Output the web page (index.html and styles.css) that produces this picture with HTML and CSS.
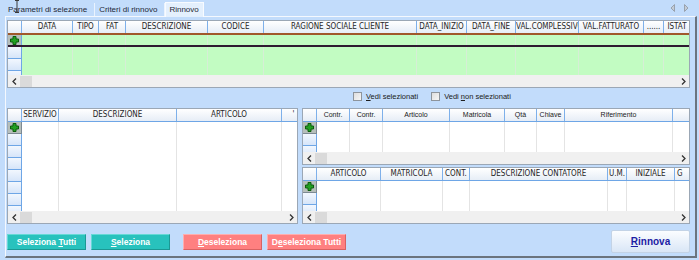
FILE: index.html
```html
<!DOCTYPE html>
<html lang="it">
<head>
    <meta charset="UTF-8">
    <meta name="viewport" content="width=device-width, initial-scale=1.0">
    <title>Rinnovo</title>
    <link rel="stylesheet" href="styles.css">
</head>
<body>
<div class="tabbar">
    <div class="tab">Parametri di selezione</div>
    <div class="tab">Criteri di rinnovo</div>
    <div class="tab active">Rinnovo</div>
    <div class="tab-arrows">
        <svg width="19" height="8" viewBox="0 0 19 8"><polygon points="4.5,0.5 1,4 4.5,7.5" fill="#c4ccd6" stroke="#98a2ae"/><polygon points="14.5,0.5 18,4 14.5,7.5" fill="#c4ccd6" stroke="#98a2ae"/></svg>
    </div>
</div>
<svg class="cursor" width="6" height="13" viewBox="0 0 6 13"><path d="M1 0.5h4M3 0.5v12M1 12.5h4" stroke="#3a3a3a" fill="none"/></svg>

<div class="panel">
    <!-- contratti da rinnovare -->
    <div class="grid g-top" data-rows="4">
        <div class="row head">
            <div class="c ind"></div>
            <div class="c">DATA</div>
            <div class="c">TIPO</div>
            <div class="c">FAT</div>
            <div class="c">DESCRIZIONE</div>
            <div class="c">CODICE</div>
            <div class="c">RAGIONE SOCIALE CLIENTE</div>
            <div class="c">DATA_INIZIO</div>
            <div class="c">DATA_FINE</div>
            <div class="c">VAL.COMPLESSIVO</div>
            <div class="c">VAL.FATTURATO</div>
            <div class="c">......</div>
            <div class="c">ISTAT</div>
        </div>
        <div class="body"></div>
        <div class="hscroll"><span class="arr"><svg width="5" height="7" viewBox="0 0 5 7"><polyline points="4,0.5 1,3.5 4,6.5" fill="none" stroke="#333" stroke-width="1.3"/></svg></span><span class="thumb"></span><span class="arr end"><svg width="5" height="7" viewBox="0 0 5 7"><polyline points="1,0.5 4,3.5 1,6.5" fill="none" stroke="#333" stroke-width="1.3"/></svg></span></div>
    </div>

    <div class="checks">
        <label class="chk"><span class="box"></span><span><u>V</u>edi selezionati</span></label>
        <label class="chk"><span class="box"></span><span>Vedi <u>n</u>on selezionati</span></label>
    </div>

    <div class="middle">
        <div class="grid g-left" data-rows="8">
            <div class="row head">
                <div class="c ind"></div>
                <div class="c">SERVIZIO</div>
                <div class="c">DESCRIZIONE</div>
                <div class="c">ARTICOLO</div>
                <div class="c">'</div>
            </div>
            <div class="body"></div>
            <div class="hscroll"><span class="arr"><svg width="5" height="7" viewBox="0 0 5 7"><polyline points="4,0.5 1,3.5 4,6.5" fill="none" stroke="#333" stroke-width="1.3"/></svg></span><span class="thumb"></span><span class="arr end"><svg width="5" height="7" viewBox="0 0 5 7"><polyline points="1,0.5 4,3.5 1,6.5" fill="none" stroke="#333" stroke-width="1.3"/></svg></span></div>
        </div>

        <div class="right">
            <div class="grid g-r g-contr" data-rows="3">
                <div class="row head mixed">
                    <div class="c ind"></div>
                    <div class="c">Contr.</div>
                    <div class="c">Contr.</div>
                    <div class="c">Articolo</div>
                    <div class="c">Matricola</div>
                    <div class="c">Qtà</div>
                    <div class="c">Chiave</div>
                    <div class="c">Riferimento</div>
                    <div class="c"></div>
                </div>
                <div class="body"></div>
                <div class="hscroll"><span class="arr"><svg width="5" height="7" viewBox="0 0 5 7"><polyline points="4,0.5 1,3.5 4,6.5" fill="none" stroke="#333" stroke-width="1.3"/></svg></span><span class="thumb"></span><span class="arr end"><svg width="5" height="7" viewBox="0 0 5 7"><polyline points="1,0.5 4,3.5 1,6.5" fill="none" stroke="#333" stroke-width="1.3"/></svg></span></div>
            </div>
            <div class="grid g-r g-cont" data-rows="3">
                <div class="row head">
                    <div class="c ind"></div>
                    <div class="c">ARTICOLO</div>
                    <div class="c">MATRICOLA</div>
                    <div class="c">CONT.</div>
                    <div class="c">DESCRIZIONE CONTATORE</div>
                    <div class="c">U.M.</div>
                    <div class="c">INIZIALE</div>
                    <div class="c left">G</div>
                </div>
                <div class="body"></div>
                <div class="hscroll"><span class="arr"><svg width="5" height="7" viewBox="0 0 5 7"><polyline points="4,0.5 1,3.5 4,6.5" fill="none" stroke="#333" stroke-width="1.3"/></svg></span><span class="thumb"></span><span class="arr end"><svg width="5" height="7" viewBox="0 0 5 7"><polyline points="1,0.5 4,3.5 1,6.5" fill="none" stroke="#333" stroke-width="1.3"/></svg></span></div>
            </div>
        </div>
    </div>

    <div class="buttons">
        <button class="btn teal">Seleziona <u>T</u>utti</button>
        <button class="btn teal"><u>S</u>eleziona</button>
        <button class="btn red spaced"><u>D</u>eseleziona</button>
        <button class="btn red">D<u>e</u>seleziona Tutti</button>
        <button class="rinnova"><u>R</u>innova</button>
    </div>
</div>

<script>
    var plusIcon = '<svg width="9" height="9" viewBox="0 0 9 9"><path d="M3 0.5h3v2.5h2.5v3h-2.5v2.5h-3v-2.5h-2.5v-3h2.5z" fill="#22a022" stroke="#0c5c0c"/></svg>';

    // empty rows for every grid, first row is the "new record" row
    var grids = document.querySelectorAll('.grid');
    for (var g = 0; g < grids.length; g++) {
        var grid = grids[g];
        var cols = grid.querySelector('.head').children.length;
        var body = grid.querySelector('.body');
        var rows = parseInt(grid.getAttribute('data-rows'), 10);

        for (var i = 0; i < rows; i++) {
            var row = document.createElement('div');
            row.className = i === 0 ? 'row first' : 'row';
            for (var c = 0; c < cols; c++) {
                var cell = document.createElement('div');
                cell.className = 'c';
                if (c === 0) {
                    cell.className = 'c ind';
                    if (i === 0) {
                        cell.className += ' plus';
                        cell.innerHTML = plusIcon;
                    }
                }
                row.appendChild(cell);
            }
            body.appendChild(row);
        }
    }
</script>
</body>
</html>
```

FILE: styles.css
```css
body {
    margin: 0;
    width: 699px;
    height: 260px;
    overflow: hidden;
    position: relative;
    background-color: #c2dcfb;
    font-family: "Liberation Sans", Arial, sans-serif;
    font-size: 8px;
    color: #1e2836;
}

/* tabs */
.tabbar {
    display: flex;
    align-items: flex-end;
    height: 16px;
    padding-left: 4px;
    padding-right: 10px;
}

.tab {
    height: 13px;
    line-height: 13px;
    padding: 0 7px 0 4px;
    border-right: 1px solid #eaf3fe;
    white-space: nowrap;
}

.tab.active {
    position: relative;
    z-index: 1;
    height: 14px;
    margin-bottom: -1px;
    padding: 0 4px 0 3px;
    background-color: #e4f0fd;
    border: 1px solid #f8fbff;
    border-bottom: none;
}

.tab-arrows {
    margin-left: auto;
    align-self: center;
    display: flex;
}

.cursor {
    position: absolute;
    left: 14px;
    top: 0;
}

/* tab page */
.panel {
    box-sizing: border-box;
    width: 692px;
    height: 242px;
    margin-left: 5px;
    padding: 3px 5px 0 1px;
    border-top: 1px solid #f4f8fe;
    border-left: 1px solid #f4f8fe;
    border-right: 2px solid #6b747e;
    border-bottom: 2px solid #6b747e;
}

/* grids */
.grid {
    box-sizing: border-box;
    display: flex;
    flex-direction: column;
    overflow: hidden;
    background-color: #fff;
    border: 1px solid #9ba7b5;
}

.row {
    display: grid;
    flex: none;
    height: 12px;
    box-sizing: border-box;
}

.c {
    box-sizing: border-box;
    overflow: hidden;
    white-space: nowrap;
    border-right: 1px solid #e4e4e4;
}

.head {
    height: 13px;
    background: linear-gradient(#ffffff, #e6edf6);
    border-bottom: 1px solid #6ea6e6;
}

.head .c {
    text-align: center;
    line-height: 12px;
    font-family: "DejaVu Sans Condensed", "DejaVu Sans", sans-serif;
    font-stretch: condensed;
    font-size: 8px;
    color: #262626;
    border-right-color: #7eb0ea;
}

.head.mixed .c {
    font-family: "Liberation Sans", Arial, sans-serif;
    font-stretch: normal;
    font-size: 7px;
    color: #1a1a1a;
}

.head .c.left {
    text-align: left;
    padding-left: 2px;
}

.body {
    flex: 1;
    overflow: hidden;
}

.ind {
    background: linear-gradient(#f2f7fe, #d6e5f9);
    border-right: 1px solid #6ea6e6;
    border-bottom: 1px solid #6ea6e6;
}

.head .ind {
    background: none;
    border-bottom: none;
}

.ind.plus {
    display: flex;
    align-items: center;
    justify-content: center;
    background: #b6bfbb;
    border-color: #7d8a94;
}

.hscroll {
    flex: none;
    display: flex;
    align-items: center;
    height: 12px;
    background-color: #f0f0f0;
}

.arr {
    width: 12px;
    display: flex;
    justify-content: center;
}

.arr.end {
    margin-left: auto;
}

.thumb {
    width: 12px;
    height: 11px;
    background-color: #dadada;
}

/* top grid */
.g-top {
    height: 68px;
}

.g-top .row {
    grid-template-columns: 14px 51px 26px 27px 82px 56px 153px 50px 49px 63px 65px 20px 27px;
}

.g-top .head {
    height: 12px;
    border-bottom: none;
}

.g-top .body {
    background-color: #c2fcc2;
}

.g-top .body .c {
    border-right-color: #d6eed6;
}

.g-top .body .ind {
    border-right-color: #6ea6e6;
}

.g-top .row.first {
    height: 14px;
    border-top: 2px solid #a0582a;
    border-bottom: 2px solid #2e1a30;
}

.g-top .row.first .ind {
    border-bottom: none;
}

/* check boxes */
.checks {
    display: flex;
    gap: 13px;
    height: 20px;
    box-sizing: border-box;
    padding: 4px 0 0 346px;
    font-size: 7.5px;
    color: #202020;
}

.chk {
    display: flex;
    align-items: flex-start;
    line-height: 9px;
    white-space: nowrap;
}

.box {
    width: 9px;
    height: 9px;
    box-sizing: border-box;
    margin-right: 4px;
    border: 1px solid #8d949c;
    background: linear-gradient(135deg, #dedede, #f6f6f6);
}

/* lower grids */
.middle {
    display: flex;
    gap: 4px;
    height: 116px;
}

.g-left {
    width: 291px;
    height: 116px;
}

.g-left .row {
    grid-template-columns: 14px 37px 118px 105px 24px;
}

.right {
    display: flex;
    flex-direction: column;
    gap: 2px;
    width: 388px;
}

.g-r {
    height: 57px;
}

.g-contr .row {
    grid-template-columns: 14px 33px 33px 67px 55px 32px 28px 108px 30px;
}

.g-cont .row {
    grid-template-columns: 14px 64px 62px 27px 138px 19px 48px 30px;
}

/* buttons */
.buttons {
    display: flex;
    align-items: center;
    height: 23px;
    margin-top: 6px;
}

.btn {
    width: 79px;
    height: 16px;
    margin-right: 5px;
    padding: 0;
    font-family: "Liberation Sans", Arial, sans-serif;
    font-size: 8.5px;
    font-weight: bold;
    color: #fff;
    border: 1px solid;
}

.btn.teal {
    background-color: #28c2bd;
    border-color: #66d9d5 #1c9894 #1c9894 #66d9d5;
}

.btn.red {
    background-color: #ff8080;
    border-color: #ffaeae #d86262 #d86262 #ffaeae;
}

.btn.spaced {
    margin-left: 8px;
}

.rinnova {
    margin-left: auto;
    width: 79px;
    height: 23px;
    padding: 0;
    font-family: "Liberation Sans", Arial, sans-serif;
    font-size: 10px;
    font-weight: bold;
    color: #1c1ca4;
    background: linear-gradient(#fbfdff, #d9e6f6);
    border: 1px solid #c3d3e6;
    border-radius: 2px;
}
```
